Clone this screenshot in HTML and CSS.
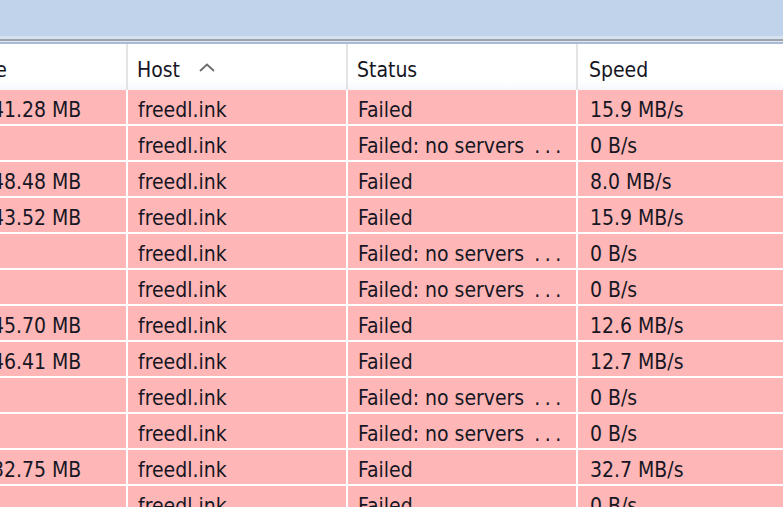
FILE: index.html
```html
<!DOCTYPE html>
<html>
<head>
<meta charset="utf-8">
<link rel="stylesheet" href="styles.css">
</head>
<body>
<div class="titlebar"></div>
<div class="rule"></div>
<div class="list">
  <div class="row head">
    <div class="cell c1"><span class="size-head">Size</span></div>
    <div class="cell">Host <svg class="sort" width="16" height="9" viewBox="0 0 16 9"><path d="M1 8 L8 1.5 L15 8" fill="none" stroke="#6b6b6b" stroke-width="1.8"/></svg></div>
    <div class="cell">Status</div>
    <div class="cell last">Speed</div>
  </div>
  <div class="row"><div class="cell c1">41.28 MB</div><div class="cell">freedl.ink</div><div class="cell">Failed</div><div class="cell last">15.9 MB/s</div></div>
  <div class="row"><div class="cell c1"></div><div class="cell">freedl.ink</div><div class="cell">Failed: no servers <span class="dots">...</span></div><div class="cell last">0 B/s</div></div>
  <div class="row"><div class="cell c1">48.48 MB</div><div class="cell">freedl.ink</div><div class="cell">Failed</div><div class="cell last">8.0 MB/s</div></div>
  <div class="row"><div class="cell c1">43.52 MB</div><div class="cell">freedl.ink</div><div class="cell">Failed</div><div class="cell last">15.9 MB/s</div></div>
  <div class="row"><div class="cell c1"></div><div class="cell">freedl.ink</div><div class="cell">Failed: no servers <span class="dots">...</span></div><div class="cell last">0 B/s</div></div>
  <div class="row"><div class="cell c1"></div><div class="cell">freedl.ink</div><div class="cell">Failed: no servers <span class="dots">...</span></div><div class="cell last">0 B/s</div></div>
  <div class="row"><div class="cell c1">45.70 MB</div><div class="cell">freedl.ink</div><div class="cell">Failed</div><div class="cell last">12.6 MB/s</div></div>
  <div class="row"><div class="cell c1">46.41 MB</div><div class="cell">freedl.ink</div><div class="cell">Failed</div><div class="cell last">12.7 MB/s</div></div>
  <div class="row"><div class="cell c1"></div><div class="cell">freedl.ink</div><div class="cell">Failed: no servers <span class="dots">...</span></div><div class="cell last">0 B/s</div></div>
  <div class="row"><div class="cell c1"></div><div class="cell">freedl.ink</div><div class="cell">Failed: no servers <span class="dots">...</span></div><div class="cell last">0 B/s</div></div>
  <div class="row"><div class="cell c1">32.75 MB</div><div class="cell">freedl.ink</div><div class="cell">Failed</div><div class="cell last">32.7 MB/s</div></div>
  <div class="row"><div class="cell c1"></div><div class="cell">freedl.ink</div><div class="cell">Failed</div><div class="cell last">0 B/s</div></div>
</div>
</body>
</html>
```
FILE: styles.css
```css
html, body {
  margin: 0;
  padding: 0;
  width: 783px;
  height: 507px;
  overflow: hidden;
  background: #ffffff;
}
body {
  font-family: "DejaVu Sans Condensed", "DejaVu Sans", sans-serif;
  font-stretch: condensed;
  font-size: 21px;
  color: #161624;
}
.titlebar {
  height: 36px;
  background: #c1d3ea;
}
.rule {
  height: 8px;
  box-sizing: border-box;
  background: linear-gradient(#d6e1ef 0 3px, #9da3ab 3px 5px, #dfe6f1 5px 6px, #aab9d6 6px 8px);
}
.list {
  margin-left: -40px;
  width: 823px;
}
.row {
  display: grid;
  grid-template-columns: 168px 220px 230px 1fr;
  height: 36px;
  background: #ffb6b6;
  border-bottom: 2px solid #ffffff;
  box-sizing: border-box;
}
.row.head {
  height: 46px;
  background: linear-gradient(#ffffff 0 80%, #f5f8fc 100%);
  border-bottom: none;
}
.cell {
  border-right: 2px solid #ffffff;
  padding-left: 10px;
  padding-top: 5px;
  display: flex;
  align-items: center;
  white-space: pre;
  overflow: hidden;
}
.c1 {
  padding-left: 32px;
}
.head .cell {
  border-right-color: #e4e4e4;
  padding-top: 6px;
  padding-left: 9px;
}
.head .c1 {
  padding-left: 8px;
}
.cell.last {
  border-right: none;
  padding-left: 12px;
}
.head .cell.last {
  padding-left: 11px;
}
.dots {
  letter-spacing: 4.5px;
  margin-left: 4px;
}
.sort {
  margin-left: 13px;
  margin-top: -6px;
}
```
